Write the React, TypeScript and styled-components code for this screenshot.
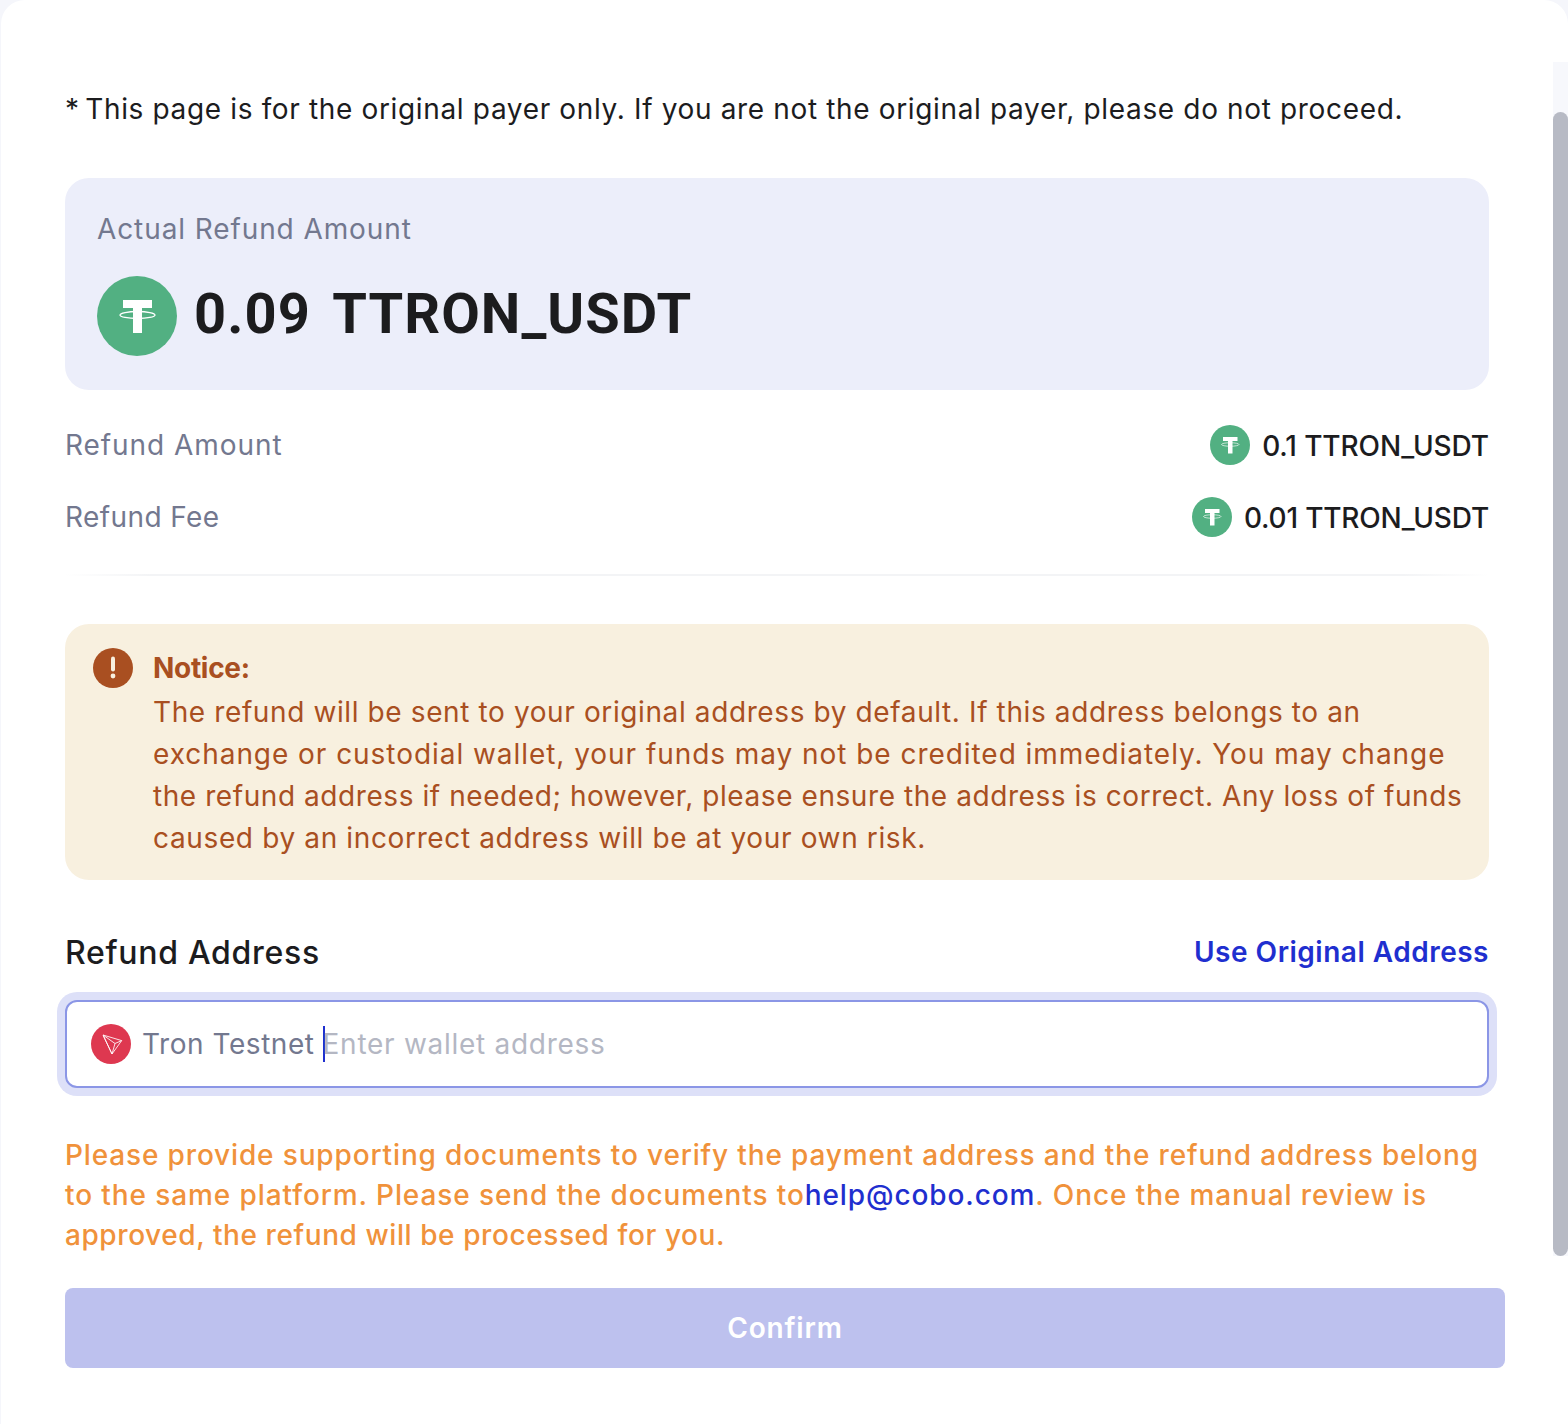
import React from "react";
import styled, { createGlobalStyle } from "styled-components";

const Global = createGlobalStyle`
  html, body { margin: 0; padding: 0; background: #f5f6fb; }
  body { font-family: "Inter", "Open Sans", sans-serif; color: #1c1c1e; }
`;

const Page = styled.div`
  position: relative;
  width: 1568px;
  height: 1424px;
  overflow: hidden;
  padding-left: 1px;
  box-sizing: border-box;
`;

const Modal = styled.main`
  background: #fff;
  height: 100%;
  border-radius: 24px 24px 0 0;
  padding: 88px 79px 0 64px;
  box-sizing: border-box;
`;

const Track = styled.div`
  position: absolute;
  top: 62px;
  right: 0;
  width: 15px;
  height: 1194px;
  background: #f7f8fc;
`;

const Thumb = styled.div`
  position: absolute;
  top: 50px;
  left: 0;
  right: 0;
  bottom: 0;
  background: #b7bac4;
  border-radius: 8px;
`;

const Intro = styled.p`
  margin: 0 0 48px;
  font-size: 28px;
  line-height: 42px;
  letter-spacing: 0.65px;
  white-space: nowrap;
`;

const Asterisk = styled.span`
  margin-right: -3px;
`;

const Card = styled.section`
  background: #eceefa;
  border-radius: 24px;
  height: 212px;
  box-sizing: border-box;
  padding: 31px 32px 0;
`;

const CardLabel = styled.div`
  font-size: 28px;
  line-height: 40px;
  color: #73788f;
  letter-spacing: 0.9px;
`;

const AmountRow = styled.div`
  display: flex;
  align-items: center;
  gap: 17px;
  margin-top: 27px;
`;

const Amount = styled.div`
  font-family: "Roboto", sans-serif;
  font-weight: 700;
  font-size: 56px;
  line-height: 76px;
  padding-bottom: 4px;
  letter-spacing: 1.05px;
  word-spacing: -3.5px;
  white-space: pre;
  color: #1c1c1e;
`;

const Rows = styled.div`
  margin-top: 35px;
  display: flex;
  flex-direction: column;
  gap: 32px;
`;

const Row = styled.div`
  display: flex;
  justify-content: space-between;
  align-items: center;
  height: 40px;
`;

const RowLabel = styled.span<{ $spacing: number }>`
  font-size: 28px;
  color: #73788f;
  letter-spacing: ${(p) => p.$spacing}px;
`;

const RowValue = styled.span<{ $spacing: number }>`
  display: flex;
  align-items: center;
  gap: 12px;
  font-size: 28px;
  font-weight: 500;
  letter-spacing: ${(p) => p.$spacing}px;
`;

const RowAmount = styled.span`
  padding-top: 2px;
`;

const Divider = styled.hr`
  border: 0;
  height: 2px;
  margin: 37px 0 48px;
  background: linear-gradient(90deg, #fff 0, #f3f4f6 6%, #f3f4f6 94%, #fff 100%);
`;

const Notice = styled.section`
  display: flex;
  gap: 20px;
  background: #f8f0df;
  color: #a94f21;
  border-radius: 24px;
  padding: 22px 28px 21px;
  height: 256px;
  box-sizing: border-box;
`;

const NoticeIconWrap = styled.div`
  flex: none;
  margin-top: 2px;
  height: 40px;
`;

const NoticeBody = styled.div`
  font-size: 28px;
  line-height: 42px;
  white-space: nowrap;
`;

const NoticeTitle = styled.div`
  font-weight: 700;
  line-height: 45px;
  letter-spacing: -0.3px;
`;

const NoticeLine = styled.div<{ $spacing: number }>`
  letter-spacing: ${(p) => p.$spacing}px;
`;

const AddressHeader = styled.div`
  display: flex;
  justify-content: space-between;
  align-items: center;
  height: 40px;
  margin-top: 52px;
`;

const AddressTitle = styled.h2`
  margin: 0;
  font-size: 32px;
  font-weight: 500;
  letter-spacing: 0.7px;
`;

const AddressLink = styled.a`
  font-size: 28px;
  font-weight: 600;
  color: #1f2fcf;
  letter-spacing: 0.5px;
`;

const InputBox = styled.div`
  display: flex;
  align-items: center;
  height: 88px;
  margin-top: 28px;
  box-sizing: border-box;
  background: #fff;
  border: 2px solid #8b96e6;
  border-radius: 12px;
  box-shadow: 0 0 0 8px #dde0f8;
  padding-left: 24px;
  font-size: 28px;
`;

const Network = styled.span`
  display: flex;
  align-items: center;
  gap: 11px;
  color: #73788f;
  letter-spacing: 0.55px;
`;

const Caret = styled.span`
  width: 2px;
  height: 36px;
  margin-left: 8px;
  background: #1f2fcf;
`;

const Placeholder = styled.span`
  color: #b4b7c3;
  margin-left: -2px;
  letter-spacing: 0.72px;
`;

const Warning = styled.div`
  margin-top: 47px;
  font-size: 28px;
  font-weight: 500;
  line-height: 40px;
  color: #f0923b;
  white-space: nowrap;
`;

const WarningLine = styled.div<{ $spacing: number }>`
  letter-spacing: ${(p) => p.$spacing}px;
`;

const WarningLink = styled.a`
  color: #1f2fcf;
`;

const Confirm = styled.button`
  display: block;
  width: 1440px;
  height: 80px;
  margin-top: 33px;
  border: 0;
  border-radius: 8px;
  background: #bdc1ee;
  color: #fff;
  font: 600 28px "Inter", sans-serif;
  letter-spacing: 0.8px;
  padding-bottom: 2px;
`;

const TetherIcon = ({ size }: { size: number }) => (
  <svg width={size} height={size} viewBox="0 0 80 80" style={{ flex: "none" }} aria-hidden="true">
    <circle cx="40" cy="40" r="40" fill="#52b082" />
    <path d="M26 24h29v8H45v25h-9V32H26z" fill="#fff" />
    <ellipse cx="40.500" cy="39" rx="17.500" ry="3.500" fill="none" stroke="#fff" strokeWidth="1.300" />
  </svg>
);

const AlertIcon = () => (
  <svg width="40" height="40" viewBox="0 0 40 40" aria-hidden="true">
    <circle cx="20" cy="20" r="20" fill="#a94f21" />
    <path d="M20 10.500v11" stroke="#f8f0df" strokeWidth="4" strokeLinecap="round" />
    <circle cx="20" cy="28" r="2.400" fill="#f8f0df" />
  </svg>
);

const TronIcon = () => (
  <svg width="40" height="40" viewBox="0 0 40 40" aria-hidden="true">
    <circle cx="20" cy="20" r="20" fill="#de3850" />
    <path
      d="M12 11l18.700 5.600L21 30 12 11l12 8.500 6.700-2.900M24 19.500L21 30M12.500 12l8.500 18"
      fill="none"
      stroke="#fff"
      strokeOpacity="0.85"
      strokeWidth="1"
      strokeLinejoin="round"
    />
  </svg>
);

export default function App() {
  return (
    <>
      <Global />
      <Page>
        <Modal>
          <Intro>
            <Asterisk>*</Asterisk> This page is for the original payer only. If you are not the original payer, please do not proceed.
          </Intro>
          <Card>
            <CardLabel>Actual Refund Amount</CardLabel>
            <AmountRow>
              <TetherIcon size={80} />
              <Amount>{"0.09  TTRON_USDT"}</Amount>
            </AmountRow>
          </Card>
          <Rows>
            <Row>
              <RowLabel $spacing={0.94}>Refund Amount</RowLabel>
              <RowValue $spacing={-0.1}>
                <TetherIcon size={40} />
                <RowAmount>0.1 TTRON_USDT</RowAmount>
              </RowValue>
            </Row>
            <Row>
              <RowLabel $spacing={0.4}>Refund Fee</RowLabel>
              <RowValue $spacing={-0.2}>
                <TetherIcon size={40} />
                <RowAmount>0.01 TTRON_USDT</RowAmount>
              </RowValue>
            </Row>
          </Rows>
          <Divider />
          <Notice>
            <NoticeIconWrap>
              <AlertIcon />
            </NoticeIconWrap>
            <NoticeBody>
              <NoticeTitle>Notice:</NoticeTitle>
              <NoticeLine $spacing={0.61}>
                The refund will be sent to your original address by default. If this address belongs to an
              </NoticeLine>
              <NoticeLine $spacing={0.95}>
                exchange or custodial wallet, your funds may not be credited immediately. You may change
              </NoticeLine>
              <NoticeLine $spacing={0.57}>
                the refund address if needed; however, please ensure the address is correct. Any loss of funds
              </NoticeLine>
              <NoticeLine $spacing={0.64}>caused by an incorrect address will be at your own risk.</NoticeLine>
            </NoticeBody>
          </Notice>
          <AddressHeader>
            <AddressTitle>Refund Address</AddressTitle>
            <AddressLink>Use Original Address</AddressLink>
          </AddressHeader>
          <InputBox>
            <Network>
              <TronIcon />
              Tron Testnet
            </Network>
            <Caret />
            <Placeholder>Enter wallet address</Placeholder>
          </InputBox>
          <Warning>
            <WarningLine $spacing={0.85}>
              Please provide supporting documents to verify the payment address and the refund address belong
            </WarningLine>
            <WarningLine $spacing={0.9}>
              to the same platform. Please send the documents to<WarningLink>help@cobo.com</WarningLink>. Once the manual review is
            </WarningLine>
            <WarningLine $spacing={0.58}>approved, the refund will be processed for you.</WarningLine>
          </Warning>
          <Confirm type="button">Confirm</Confirm>
        </Modal>
        <Track>
          <Thumb />
        </Track>
      </Page>
    </>
  );
}
